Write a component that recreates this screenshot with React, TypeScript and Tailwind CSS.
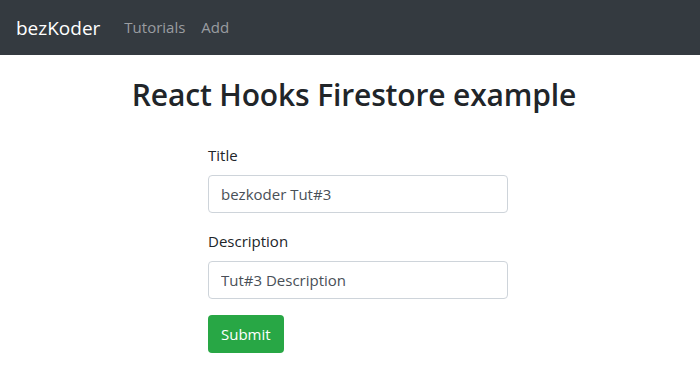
import { useState } from 'react'

export default function App() {
  const [title, setTitle] = useState('bezkoder Tut#3')
  const [description, setDescription] = useState('Tut#3 Description')

  return (
    <div className="min-h-[380px] bg-white text-[#212529]" style={{ fontFamily: '"Open Sans", "Noto Sans", sans-serif' }}>
      <nav className="flex h-[55px] items-center bg-[#343a40] px-4">
        <a href="#" className="mr-4 text-[19px] leading-[30px] text-white">
          bezKoder
        </a>
        <div className="flex">
          <a href="#" className="px-2 text-[15px] text-[#9a9da0]">
            Tutorials
          </a>
          <a href="#" className="px-2 text-[15px] text-[#9a9da0]">
            Add
          </a>
        </div>
      </nav>

      <div className="pt-[22px]">
        <h2 className="ml-[8px] text-center text-[30px] font-semibold leading-[1.2] tracking-[-0.005em]">React Hooks Firestore example</h2>

        <form className="mt-[30px] ml-[208px] w-[300px]" onSubmit={(e) => e.preventDefault()}>
          <div className="mb-4">
            <label htmlFor="title" className="mb-2 block text-[15px] leading-6">
              Title
            </label>
            <input
              id="title"
              type="text"
              value={title}
              onChange={(e) => setTitle(e.target.value)}
              className="block h-[38px] w-full rounded border border-[#ced4da] px-3 text-[15px] text-[#495057] outline-none"
            />
          </div>
          <div className="mb-4">
            <label htmlFor="description" className="mb-2 block text-[15px] leading-6">
              Description
            </label>
            <input
              id="description"
              type="text"
              value={description}
              onChange={(e) => setDescription(e.target.value)}
              className="block h-[38px] w-full rounded border border-[#ced4da] px-3 text-[15px] text-[#495057] outline-none"
            />
          </div>
          <button type="submit" className="h-[38px] rounded bg-[#28a745] px-[13px] text-[15px] text-white">
            Submit
          </button>
        </form>
      </div>
    </div>
  )
}
